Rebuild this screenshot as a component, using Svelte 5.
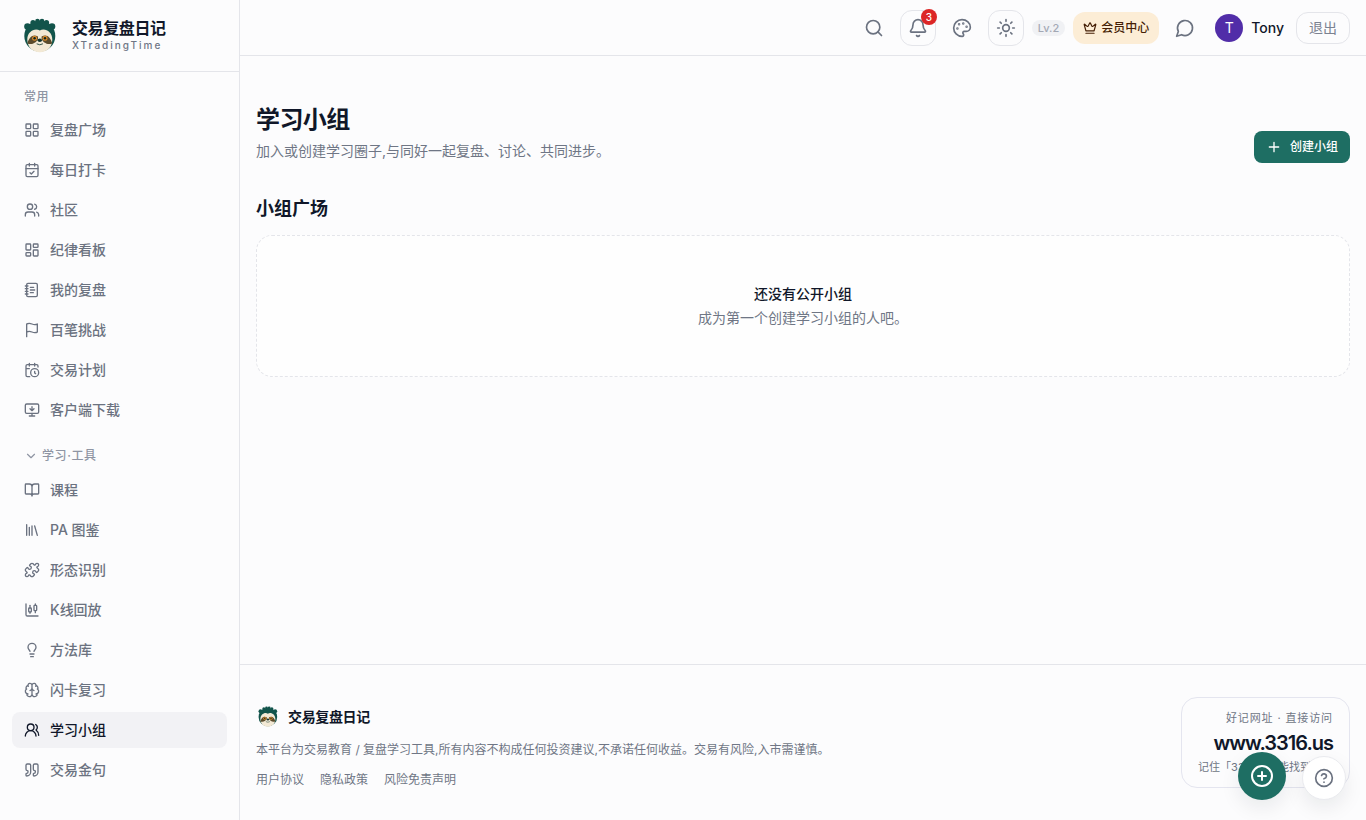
<script>
  const icons = {
    grid: '<rect width="7" height="7" x="3" y="3" rx="1"/><rect width="7" height="7" x="14" y="3" rx="1"/><rect width="7" height="7" x="14" y="14" rx="1"/><rect width="7" height="7" x="3" y="14" rx="1"/>',
    check: '<path d="M8 2v4M16 2v4"/><rect width="18" height="18" x="3" y="4" rx="2"/><path d="M3 10h18M9 16l2 2 4-4"/>',
    users: '<path d="M16 21v-2a4 4 0 0 0-4-4H6a4 4 0 0 0-4 4v2"/><circle cx="9" cy="7" r="4"/><path d="M22 21v-2a4 4 0 0 0-3-3.87M16 3.13a4 4 0 0 1 0 7.75"/>',
    dashboard: '<rect width="7" height="9" x="3" y="3" rx="1"/><rect width="7" height="5" x="14" y="3" rx="1"/><rect width="7" height="9" x="14" y="12" rx="1"/><rect width="7" height="5" x="3" y="16" rx="1"/>',
    notebook: '<path d="M2 6h4M2 10h4M2 14h4M2 18h4"/><rect width="16" height="20" x="4" y="2" rx="2"/><path d="M9.5 8h5M9.5 12H16M9.5 16H14"/>',
    flag: '<path d="M4 15s1-1 4-1 5 2 8 2 4-1 4-1V3s-1 1-4 1-5-2-8-2-4 1-4 1zM4 22v-7"/>',
    clock: '<path d="M21 7.5V6a2 2 0 0 0-2-2H5a2 2 0 0 0-2 2v14a2 2 0 0 0 2 2h3.5M16 2v4M8 2v4M3 10h5M17.5 17.5 16 16.3V14"/><circle cx="16" cy="16" r="6"/>',
    monitor: '<path d="M12 13V7M15 10l-3 3-3-3"/><rect width="20" height="14" x="2" y="3" rx="2"/><path d="M12 17v4M8 21h8"/>',
    book: '<path d="M12 7v14M3 18a1 1 0 0 1-1-1V4a1 1 0 0 1 1-1h5a4 4 0 0 1 4 4 4 4 0 0 1 4-4h5a1 1 0 0 1 1 1v13a1 1 0 0 1-1 1h-6a3 3 0 0 0-3 3 3 3 0 0 0-3-3z"/>',
    library: '<path d="m16 6 4 14M12 6v14M8 8v12M4 4v16"/>',
    puzzle: '<path d="M15.39 4.39a1 1 0 0 0 1.68-.474 2.5 2.5 0 1 1 3.014 3.015 1 1 0 0 0-.474 1.68l1.683 1.682a2.414 2.414 0 0 1 0 3.414L19.61 15.39a1 1 0 0 1-1.68-.474 2.5 2.5 0 1 0-3.014 3.015 1 1 0 0 1 .474 1.68l-1.683 1.682a2.414 2.414 0 0 1-3.414 0L8.61 19.61a1 1 0 0 0-1.68.474 2.5 2.5 0 1 1-3.014-3.015 1 1 0 0 0 .474-1.68l-1.683-1.682a2.414 2.414 0 0 1 0-3.414L4.39 8.61a1 1 0 0 1 1.68.474 2.5 2.5 0 1 0 3.014-3.015 1 1 0 0 1-.474-1.68l1.683-1.682a2.414 2.414 0 0 1 3.414 0z"/>',
    candles: '<path d="M9 5v4"/><rect width="4" height="6" x="7" y="9" rx="1"/><path d="M9 15v2M17 3v2"/><rect width="4" height="8" x="15" y="5" rx="1"/><path d="M17 13v3M3 3v16a2 2 0 0 0 2 2h16"/>',
    bulb: '<path d="M15 14c.2-1 .7-1.7 1.5-2.5 1-.9 1.5-2.2 1.5-3.5A6 6 0 0 0 6 8c0 1 .2 2.2 1.5 3.5.7.7 1.3 1.5 1.5 2.5M9 18h6M10 22h4"/>',
    brain: '<path d="M12 18V5M15 13a4.17 4.17 0 0 1-3-4 4.17 4.17 0 0 1-3 4M17.598 6.5A3 3 0 1 0 12 5a3 3 0 1 0-5.598 1.5M17.997 5.125a4 4 0 0 1 2.526 5.77M18 18a4 4 0 0 0 2-7.464M19.967 17.483A4 4 0 1 1 12 18a4 4 0 1 1-7.967-.517M6 18a4 4 0 0 1-2-7.464M6.003 5.125a4 4 0 0 0-2.526 5.77"/>',
    group: '<path d="M18 21a8 8 0 0 0-16 0"/><circle cx="10" cy="8" r="5"/><path d="M22 20c0-3.37-2-6.5-4-8a5 5 0 0 0-.45-8.3"/>',
    quote: '<path d="M16 3a2 2 0 0 0-2 2v6a2 2 0 0 0 2 2 1 1 0 0 1 1 1v1a2 2 0 0 1-2 2 1 1 0 0 0-1 1v2a1 1 0 0 0 1 1 6 6 0 0 0 6-6V5a2 2 0 0 0-2-2zM5 3a2 2 0 0 0-2 2v6a2 2 0 0 0 2 2 1 1 0 0 1 1 1v1a2 2 0 0 1-2 2 1 1 0 0 0-1 1v2a1 1 0 0 0 1 1 6 6 0 0 0 6-6V5a2 2 0 0 0-2-2z"/>',
    chevron: '<path d="m6 9 6 6 6-6"/>',
    search: '<circle cx="11" cy="11" r="8"/><path d="m21 21-4.3-4.3"/>',
    bell: '<path d="M10.268 21a2 2 0 0 0 3.464 0M3.262 15.326A1 1 0 0 0 4 17h16a1 1 0 0 0 .74-1.673C19.41 13.956 18 12.499 18 8A6 6 0 0 0 6 8c0 4.499-1.411 5.956-2.738 7.326"/>',
    palette: '<path d="M12 22a1 1 0 0 1 0-20 10 9 0 0 1 10 9 5 5 0 0 1-5 5h-2.25a1.75 1.75 0 0 0-1.4 2.8l.3.4a1.75 1.75 0 0 1-1.4 2.8z"/><g fill="currentColor"><circle cx="13.5" cy="6.5" r=".5"/><circle cx="17.5" cy="10.5" r=".5"/><circle cx="6.5" cy="12.5" r=".5"/><circle cx="8.5" cy="7.5" r=".5"/></g>',
    sun: '<circle cx="12" cy="12" r="4"/><path d="M12 2v2M12 20v2M4.93 4.93l1.41 1.41M17.66 17.66l1.41 1.41M2 12h2M20 12h2M6.34 17.66l-1.41 1.41M19.07 4.93l-1.41 1.41"/>',
    crown: '<path d="M11.562 3.266a.5.5 0 0 1 .876 0L15.39 8.87a1 1 0 0 0 1.516.294L21.183 5.5a.5.5 0 0 1 .798.519l-2.834 10.246a1 1 0 0 1-.956.734H5.81a1 1 0 0 1-.957-.734L2.02 6.02a.5.5 0 0 1 .798-.519l4.276 3.664a1 1 0 0 0 1.516-.294zM5 21h14"/>',
    message: '<path d="M7.9 20A9 9 0 1 0 4 16.1L2 22Z"/>',
    plus: '<path d="M5 12h14M12 5v14"/>',
    circlePlus: '<circle cx="12" cy="12" r="10"/><path d="M8 12h8M12 8v8"/>',
    help: '<circle cx="12" cy="12" r="10"/><path d="M9.09 9a3 3 0 0 1 5.83 1c0 2-3 3-3 3M12 17h.01"/>'
  };

  const common = [
    ['grid', '复盘广场'], ['check', '每日打卡'], ['users', '社区'], ['dashboard', '纪律看板'],
    ['notebook', '我的复盘'], ['flag', '百笔挑战'], ['clock', '交易计划'], ['monitor', '客户端下载']
  ];
  const tools = [
    ['book', '课程'], ['library', 'PA 图鉴'], ['puzzle', '形态识别'], ['candles', 'K线回放'],
    ['bulb', '方法库'], ['brain', '闪卡复习'], ['group', '学习小组'], ['quote', '交易金句']
  ];
  const current = '学习小组';
  let open = $state(true);
</script>

{#snippet icon(name, size)}
  <svg class="icon" width={size} height={size} viewBox="0 0 24 24" aria-hidden="true">{@html icons[name]}</svg>
{/snippet}

{#snippet logo(size)}
  <svg width={size} height={size} viewBox="4 5 40 40" aria-hidden="true">
    <g fill="#12544b">
      <circle cx="11.500" cy="15.500" r="3.300" /><circle cx="36" cy="15.500" r="3.300" />
      <circle cx="17" cy="11.500" r="2.600" /><circle cx="21.500" cy="10" r="2.300" /><circle cx="26" cy="10" r="2.300" /><circle cx="30.500" cy="11.500" r="2.600" />
      <ellipse cx="23.800" cy="25" rx="15.500" ry="15.500" />
    </g>
    <path d="M23.800 19.500c5-3 12.500 1 12.500 9 0 8-5.500 12.700-12.500 12.700S11.300 36.500 11.300 28.500c0-8 7.500-12 12.500-9z" fill="#f3e9d5" />
    <path d="M22 25.500c-5-3-9 .5-10.700 7 5 2 9.500-1.500 10.700-4.500zM25.600 25.500c5-3 9 .5 10.700 7-5 2-9.500-1.500-10.700-4.500z" fill="#5a4b2c" />
    <circle cx="18.600" cy="27.200" r="2.500" fill="#d98a2b" /><circle cx="29" cy="27.200" r="2.500" fill="#d98a2b" />
    <circle cx="18.600" cy="27.200" r="1.200" fill="#10271f" /><circle cx="29" cy="27.200" r="1.200" fill="#10271f" />
    <ellipse cx="23.800" cy="29.200" rx="2.200" ry="1.700" fill="#12342d" />
    <path d="M21 33q2.800 1.800 5.600 0" fill="none" stroke="#35564a" stroke-width="1" stroke-linecap="round" />
  </svg>
{/snippet}

{#snippet links(items)}
  {#each items as [name, label]}
    <a class="item" class:active={label === current} aria-current={label === current ? 'page' : undefined} href="#/">
      {@render icon(name, 16)}<span>{label}</span>
    </a>
  {/each}
{/snippet}

<div class="shell">
  <aside>
    <a class="brand" href="#/">
      {@render logo(40)}
      <span class="names"><strong>交易复盘日记</strong><small>XTradingTime</small></span>
    </a>
    <nav>
      <div class="group-label">常用</div>
      {@render links(common)}
      <button class="group-label toggle" aria-expanded={open} onclick={() => (open = !open)}>
        {@render icon('chevron', 14)}<span>学习·工具</span>
      </button>
      {#if open}{@render links(tools)}{/if}
    </nav>
  </aside>

  <div class="page">
    <header>
      <button class="tool" aria-label="搜索">{@render icon('search', 20)}</button>
      <button class="tool framed" aria-label="通知">{@render icon('bell', 20)}<span class="badge">3</span></button>
      <button class="tool" aria-label="主题配色">{@render icon('palette', 20)}</button>
      <button class="tool framed" aria-label="浅色模式">{@render icon('sun', 20)}</button>
      <span class="level">Lv.2</span>
      <a class="member" href="#/">{@render icon('crown', 14)}<span>会员中心</span></a>
      <button class="tool" aria-label="消息">{@render icon('message', 20)}</button>
      <a class="user" href="#/"><span class="avatar">T</span><span>Tony</span></a>
      <button class="logout">退出</button>
    </header>

    <main>
      <div class="intro">
        <div>
          <h1>学习小组</h1>
          <p>加入或创建学习圈子,与同好一起复盘、讨论、共同进步。</p>
        </div>
        <button class="create">{@render icon('plus', 16)}<span>创建小组</span></button>
      </div>
      <section>
        <h2>小组广场</h2>
        <div class="empty">
          <h3>还没有公开小组</h3>
          <p>成为第一个创建学习小组的人吧。</p>
        </div>
      </section>
    </main>

    <footer>
      <div class="about">
        <div class="foot-brand">{@render logo(24)}<strong>交易复盘日记</strong></div>
        <p>本平台为交易教育 / 复盘学习工具,所有内容不构成任何投资建议,不承诺任何收益。交易有风险,入市需谨慎。</p>
        <div class="legal"><a href="#/">用户协议</a><a href="#/">隐私政策</a><a href="#/">风险免责声明</a></div>
      </div>
      <div class="address">
        <span class="hint">好记网址 · 直接访问</span>
        <strong>www.3316.us</strong>
        <span>记住「3316」就能找到我们</span>
      </div>
    </footer>
  </div>

  <button class="fab" aria-label="新建">{@render icon('circlePlus', 24)}</button>
  <button class="help" aria-label="帮助">{@render icon('help', 20)}</button>
</div>

<style>
  :global(body) {
    margin: 0;
    background: #fcfcfd;
    color: #101729;
    font: 14px/20px Inter, "Noto Sans CJK SC", sans-serif;
  }
  * { box-sizing: border-box; }
  a { color: inherit; text-decoration: none; }
  button { font: inherit; color: inherit; background: none; border: 0; padding: 0; cursor: pointer; }
  h1, h2, h3, p { margin: 0; }
  svg { flex: none; display: block; }
  .icon { fill: none; stroke: currentColor; stroke-width: 2; stroke-linecap: round; stroke-linejoin: round; }

  .shell { display: flex; min-height: 100vh; }
  aside { width: 240px; flex: none; border-right: 1px solid #e4e5ea; }
  .brand { display: flex; align-items: center; gap: 12px; height: 72px; padding: 0 20px; border-bottom: 1px solid #e4e5ea; }
  .names { display: flex; flex-direction: column; }
  .names strong { font-size: 16px; line-height: 20px; font-weight: 600; letter-spacing: -0.025em; }
  .names small { font-size: 10px; line-height: 15px; font-weight: 500; letter-spacing: 0.2em; color: #6f7685; }

  nav { display: flex; flex-direction: column; gap: 4px; padding: 12px; }
  .group-label { height: 24px; padding: 0 12px; font-size: 12px; line-height: 26px; font-weight: 500; letter-spacing: 0.05em; color: #8f95a3; }
  .toggle { display: flex; align-items: center; gap: 4px; margin-top: 12px; }
  .item { display: flex; align-items: center; gap: 10px; height: 36px; padding: 0 12px; border-radius: 8px; font-weight: 500; color: #6b7280; }
  .item.active { background: #f2f2f5; color: #101729; }

  .page { flex: 1; min-width: 0; display: flex; flex-direction: column; }
  header { display: flex; align-items: center; justify-content: flex-end; gap: 8px; height: 56px; padding: 0 16px; border-bottom: 1px solid #e4e5ea; }
  .tool { position: relative; display: grid; place-items: center; width: 36px; height: 36px; border-radius: 12px; color: #6b7280; }
  .framed { border: 1px solid #e4e5ea; }
  .badge { position: absolute; top: -2px; right: -2px; min-width: 16px; height: 16px; border-radius: 8px; background: #dc2626; color: #fff; font-size: 10px; line-height: 16px; font-weight: 500; }
  .level { padding: 0 6px; border-radius: 8px; background: #f0f1f4; color: #a3a8b4; font-size: 11px; line-height: 16px; font-weight: 500; }
  .member { display: flex; align-items: center; gap: 4px; height: 32px; padding: 0 10px; border-radius: 12px; background: #fcedd6; color: #451f06; font-size: 12px; font-weight: 500; }
  .user { display: flex; align-items: center; gap: 8px; margin: 0 4px; font-weight: 500; }
  .avatar { width: 28px; height: 28px; border-radius: 50%; background: #512da8; color: #fff; line-height: 28px; text-align: center; font-weight: 400; }
  .logout { height: 32px; padding: 0 12px; border: 1px solid #e4e5ea; border-radius: 12px; color: #7b8291; }

  main { flex: 1; padding: 48px 16px; }
  .intro { display: flex; align-items: flex-end; justify-content: space-between; }
  h1 { font-size: 24px; line-height: 32px; font-weight: 600; letter-spacing: -0.025em; }
  .intro p { margin-top: 5px; padding-bottom: 2px; color: #6f7685; }
  .create { display: flex; align-items: center; gap: 8px; height: 32px; padding: 0 12px; border-radius: 8px; background: #1e6e63; color: #fff; font-size: 12px; font-weight: 500; }
  section { margin-top: 32px; }
  h2 { font-size: 18px; line-height: 28px; font-weight: 600; }
  .empty { margin-top: 12px; padding: 48px 24px; border: 1px dashed #e4e5ea; border-radius: 16px; background: #fefefe; text-align: center; }
  h3 { font-size: 14px; line-height: 20px; font-weight: 500; }
  .empty p { margin-top: 4px; color: #6f7685; }

  footer { display: flex; justify-content: space-between; align-items: flex-start; padding: 32px 16px 31px; border-top: 1px solid #e4e5ea; font-size: 12px; color: #6f7685; }
  .about { display: flex; flex-direction: column; gap: 12px; padding-top: 8px; line-height: 18px; }
  .foot-brand { display: flex; align-items: center; gap: 8px; color: #101729; font-size: 14px; }
  .foot-brand strong { font-weight: 600; letter-spacing: -0.025em; }
  .legal { display: flex; gap: 16px; }
  .address { display: flex; flex-direction: column; align-items: flex-end; padding: 12px 16px 11px; border: 1px solid #e4e5ef; border-radius: 16px; font-size: 11px; line-height: 17px; }
  .hint { letter-spacing: 0.08em; }
  .address strong { color: #101729; font-size: 20px; line-height: 32px; font-weight: 600; letter-spacing: -0.05em; }

  .fab, .help { position: fixed; display: grid; place-items: center; border-radius: 50%; }
  .fab { right: 80px; bottom: 20px; width: 48px; height: 48px; background: #1e6e63; color: #fff; box-shadow: 0 8px 20px #10172914; }
  .help { right: 20px; bottom: 20px; width: 44px; height: 44px; background: #fff; border: 1px solid #e9eaee; color: #6b7280; box-shadow: 0 8px 20px #10172914; }
</style>
